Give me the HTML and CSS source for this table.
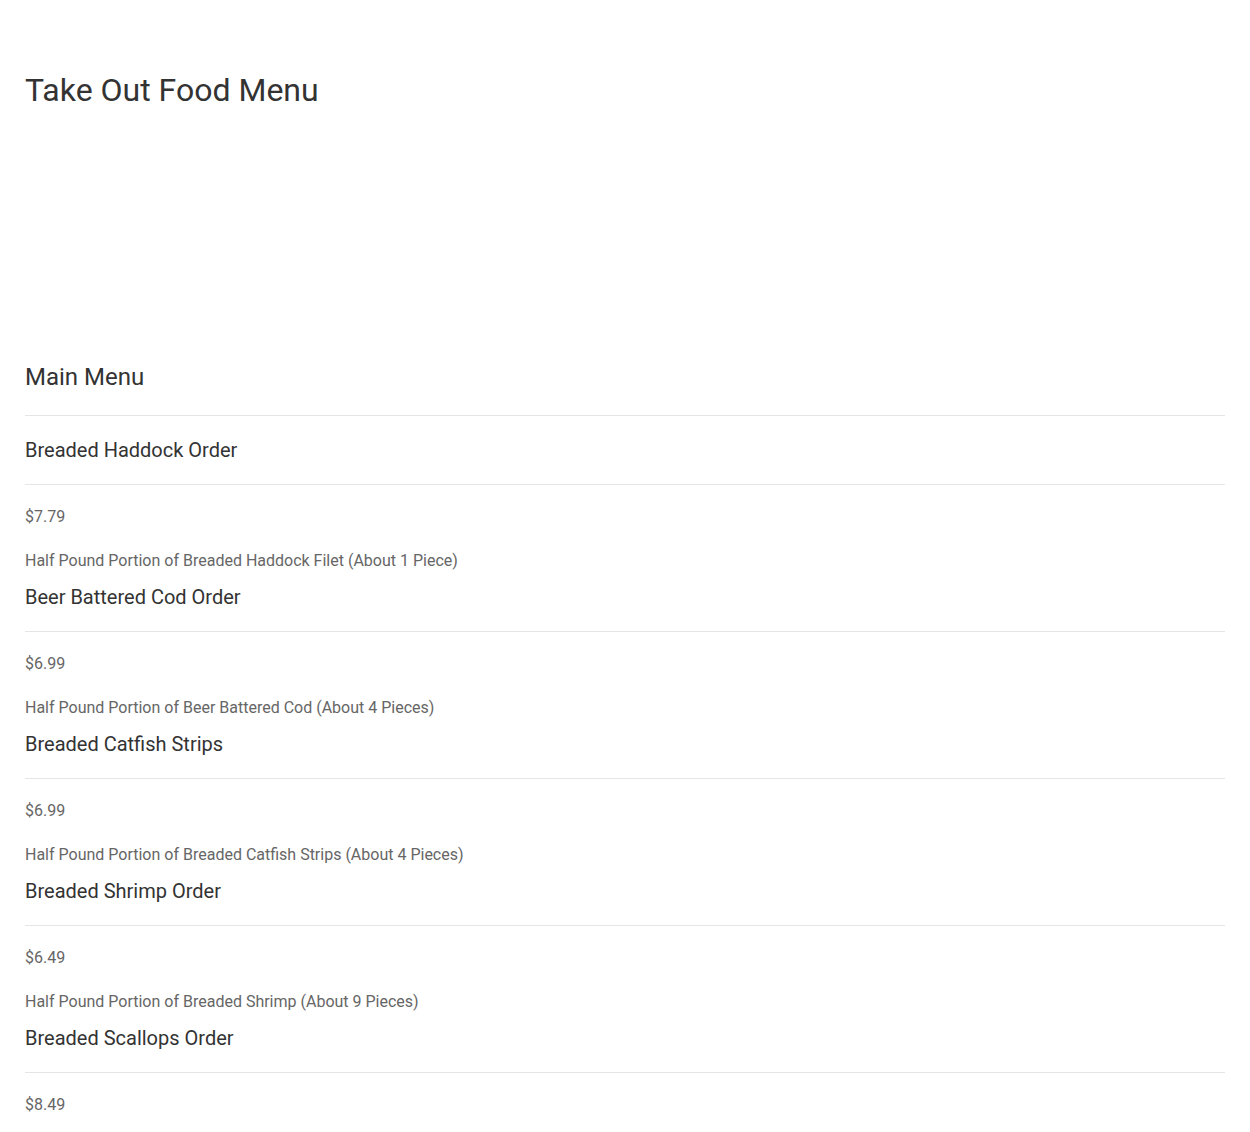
FILE: index.html
```html
<!DOCTYPE html>
<html lang="en">
<head>
<meta charset="utf-8">
<title>Take Out Food Menu</title>
<link rel="stylesheet" href="styles.css">
</head>
<body>
<div class="page">
  <h1 class="page-title">Take Out Food Menu</h1>
  <div class="ad-slot"></div>
  <section class="menu">
    <h2 class="menu-title">Main Menu</h2>
    <div class="items">
      <div class="item">
        <h3 class="item-name">Breaded Haddock Order</h3>
        <div class="item-price">$7.79</div>
        <div class="item-desc">Half Pound Portion of Breaded Haddock Filet (About 1 Piece)</div>
      </div>
      <div class="item">
        <h3 class="item-name">Beer Battered Cod Order</h3>
        <div class="item-price">$6.99</div>
        <div class="item-desc">Half Pound Portion of Beer Battered Cod (About 4 Pieces)</div>
      </div>
      <div class="item">
        <h3 class="item-name">Breaded Catfish Strips</h3>
        <div class="item-price">$6.99</div>
        <div class="item-desc">Half Pound Portion of Breaded Catfish Strips (About 4 Pieces)</div>
      </div>
      <div class="item">
        <h3 class="item-name">Breaded Shrimp Order</h3>
        <div class="item-price">$6.49</div>
        <div class="item-desc">Half Pound Portion of Breaded Shrimp (About 9 Pieces)</div>
      </div>
      <div class="item">
        <h3 class="item-name">Breaded Scallops Order</h3>
        <div class="item-price">$8.49</div>
        <div class="item-desc">Half Pound Portion of Breaded Scallops (About 8 Pieces)</div>
      </div>
    </div>
  </section>
</div>
</body>
</html>
```
FILE: styles.css
```css
html, body {
  margin: 0;
  padding: 0;
  background: #ffffff;
}
body {
  font-family: Roboto, "Liberation Sans", Arial, sans-serif;
  color: #333333;
}
.page {
  padding: 0 25px;
}
.page-title {
  margin: 71px 0 0;
  font-size: 32px;
  line-height: 38px;
  font-weight: 400;
  color: #333333;
}
.ad-slot {
  height: 254px;
}
.menu-title {
  margin: 0;
  font-size: 24px;
  line-height: 28px;
  font-weight: 400;
  color: #333333;
  padding-bottom: 24px;
  border-bottom: 1px solid #e5e5e5;
}
.items {
  padding-top: 22px;
}
.item {
  display: flex;
  flex-direction: column;
  padding-bottom: 14px;
}
.item-name {
  margin: 0;
  font-size: 20px;
  line-height: 24px;
  font-weight: 400;
  color: #333333;
  padding-bottom: 22px;
  border-bottom: 1px solid #e5e5e5;
}
.item-price {
  margin-top: 22px;
  font-size: 16px;
  line-height: 20px;
  color: #666666;
}
.item-desc {
  margin-top: 24px;
  font-size: 16px;
  line-height: 20px;
  color: #666666;
}
```
